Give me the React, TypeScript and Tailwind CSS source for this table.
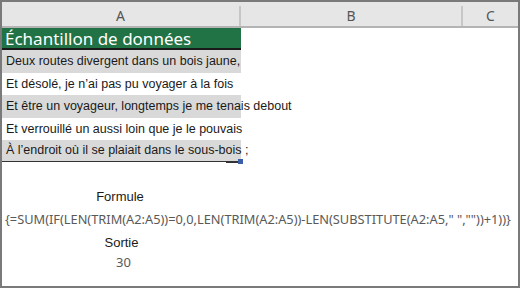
import React from "react";

const rowFont = { fontFamily: '"Liberation Sans", Arial, sans-serif' };
const uiFont = { fontFamily: '"Noto Sans", "Open Sans", sans-serif' };

function Row({ text, gray, h }: { text: string; gray?: boolean; h: string }) {
  return (
    <div className={`flex ${h}`}>
      <div
        className={`w-[239px] shrink-0 flex items-center pl-[4px] whitespace-nowrap overflow-visible text-[12.5px] text-[#1a1a1a] ${
          gray ? "bg-[#d9d9d9]" : "bg-white"
        }`}
        style={rowFont}
      >
        {text}
      </div>
    </div>
  );
}

export default function App() {
  return (
    <div className="w-[520px] h-[288px] border-2 border-[#7a7a7a] bg-white overflow-hidden flex flex-col">
      {/* column header */}
      <div className="flex h-[26px] bg-[#e6e6e6] border-b-2 border-[#b4b4b4] shrink-0 text-[14px] text-[#555]" style={uiFont}>
        <div className="w-[237px] flex items-center justify-center pt-[3px]">A</div>
        <div className="w-[2px] h-[20px] self-end bg-[#c6c6c6]" />
        <div className="w-[220px] flex items-center justify-center pt-[3px]">B</div>
        <div className="w-[2px] h-[20px] self-end bg-[#c6c6c6]" />
        <div className="flex-1 flex items-center justify-center pt-[3px]">C</div>
      </div>
      {/* title row */}
      <div className="flex h-[22px] shrink-0">
        <div
          className="w-[239px] bg-[#217346] border-b-2 border-[#1a1a1a] text-white text-[17px] leading-none flex items-center pl-[3px] whitespace-nowrap"
          style={uiFont}
        >
          Échantillon de données
        </div>
      </div>
      <Row h="h-[23px]" gray text="Deux routes divergent dans un bois jaune," />
      <Row h="h-[22px]" text="Et désolé, je n’ai pas pu voyager à la fois" />
      <Row h="h-[23px]" gray text="Et être un voyageur, longtemps je me tenais debout" />
      <Row h="h-[22px]" text="Et verrouillé un aussi loin que je le pouvais" />
      <div className="flex h-[22px]">
        <div
          className="relative w-[239px] shrink-0 flex items-center pl-[4px] whitespace-nowrap bg-[#d9d9d9] border-b border-[#333] text-[12.5px] text-[#1a1a1a]"
          style={rowFont}
        >
          À l’endroit où il se plaiait dans le sous-bois ;
          <div className="absolute right-[3px] bottom-[-2px] w-[12px] h-[2px] bg-[#333]" />
          <div className="absolute right-[-2px] bottom-[-3px] w-[5px] h-[5px] bg-[#3a5fa8]" />
        </div>
      </div>
      {/* lower block */}
      <div className="flex flex-col mt-[26px]">
        <div className="w-[236px] text-center text-[13px] text-[#1a1a1a] leading-[18px]" style={rowFont}>
          Formule
        </div>
        <div
          className="mt-[4px] pl-[3px] whitespace-nowrap text-[12.8px] text-[#595959] leading-[18px]"
          style={uiFont}
        >
          {'{=SUM(IF(LEN(TRIM(A2:A5))=0,0,LEN(TRIM(A2:A5))-LEN(SUBSTITUTE(A2:A5," ",""))+1))}'}
        </div>
        <div className="mt-[6px] w-[239px] text-center text-[13px] text-[#1a1a1a] leading-[18px]" style={rowFont}>
          Sortie
        </div>
        <div className="mt-[1px] w-[243px] text-center text-[13px] text-[#595959] leading-[18px]" style={uiFont}>
          30
        </div>
      </div>
    </div>
  );
}
